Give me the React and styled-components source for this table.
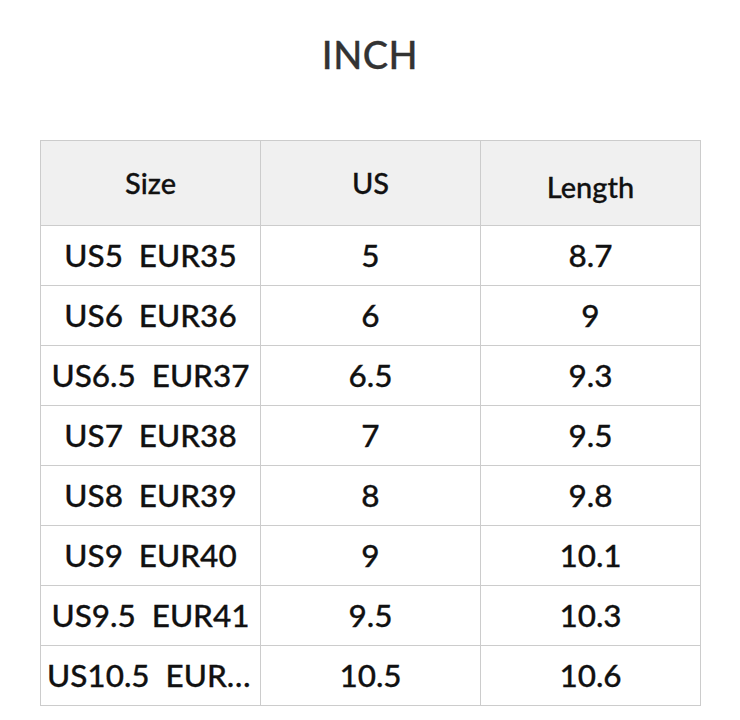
import React from "react";
import styled, { createGlobalStyle } from "styled-components";

const Global = createGlobalStyle`
  html, body { margin: 0; padding: 0; background: #fff; }
  body { font-family: Lato, "Noto Sans", sans-serif; }
`;

const Page = styled.div`
  width: 740px;
  box-sizing: border-box;
  padding: 0 40px;
`;

const Title = styled.h1`
  margin: 0;
  height: 140px;
  padding-top: 34px;
  box-sizing: border-box;
  text-align: center;
  font-size: 38px;
  font-weight: 500;
  color: #333;
  letter-spacing: 0.5px;
  line-height: 40px;
  -webkit-text-stroke: 0.3px #333;
`;

const Table = styled.table`
  width: 661px;
  border-collapse: collapse;
  table-layout: fixed;
  color: #111;
`;

const HeadCell = styled.th`
  height: 85px;
  background: #f0f0f0;
  border: 1px solid #ccc;
  font-size: 29px;
  font-weight: 500;
  text-align: center;
  vertical-align: middle;
  padding: ${(p) => (p.$low ? "6px 8px 0" : "0 8px 2px")};
  box-sizing: border-box;
  -webkit-text-stroke: 0.3px #111;
`;

const Cell = styled.td`
  height: 60px;
  border: 1px solid #ccc;
  font-size: 31.5px;
  font-weight: 500;
  text-align: center;
  vertical-align: middle;
  padding: 0 6px 2px;
  white-space: pre;
  overflow: hidden;
  text-overflow: ellipsis;
  box-sizing: border-box;
  -webkit-text-stroke: 0.3px #111;
`;

const rows = [
  ["US5  EUR35", "5", "8.7"],
  ["US6  EUR36", "6", "9"],
  ["US6.5  EUR37", "6.5", "9.3"],
  ["US7  EUR38", "7", "9.5"],
  ["US8  EUR39", "8", "9.8"],
  ["US9  EUR40", "9", "10.1"],
  ["US9.5  EUR41", "9.5", "10.3"],
  ["US10.5  EUR42", "10.5", "10.6"],
];

export default function App() {
  return (
    <Page>
      <Global />
      <Title>INCH</Title>
      <Table>
        <thead>
          <tr>
            <HeadCell>Size</HeadCell>
            <HeadCell>US</HeadCell>
            <HeadCell $low>Length</HeadCell>
          </tr>
        </thead>
        <tbody>
          {rows.map((r) => (
            <tr key={r[0]}>
              {r.map((c, i) => (
                <Cell key={i}>{c}</Cell>
              ))}
            </tr>
          ))}
        </tbody>
      </Table>
    </Page>
  );
}
